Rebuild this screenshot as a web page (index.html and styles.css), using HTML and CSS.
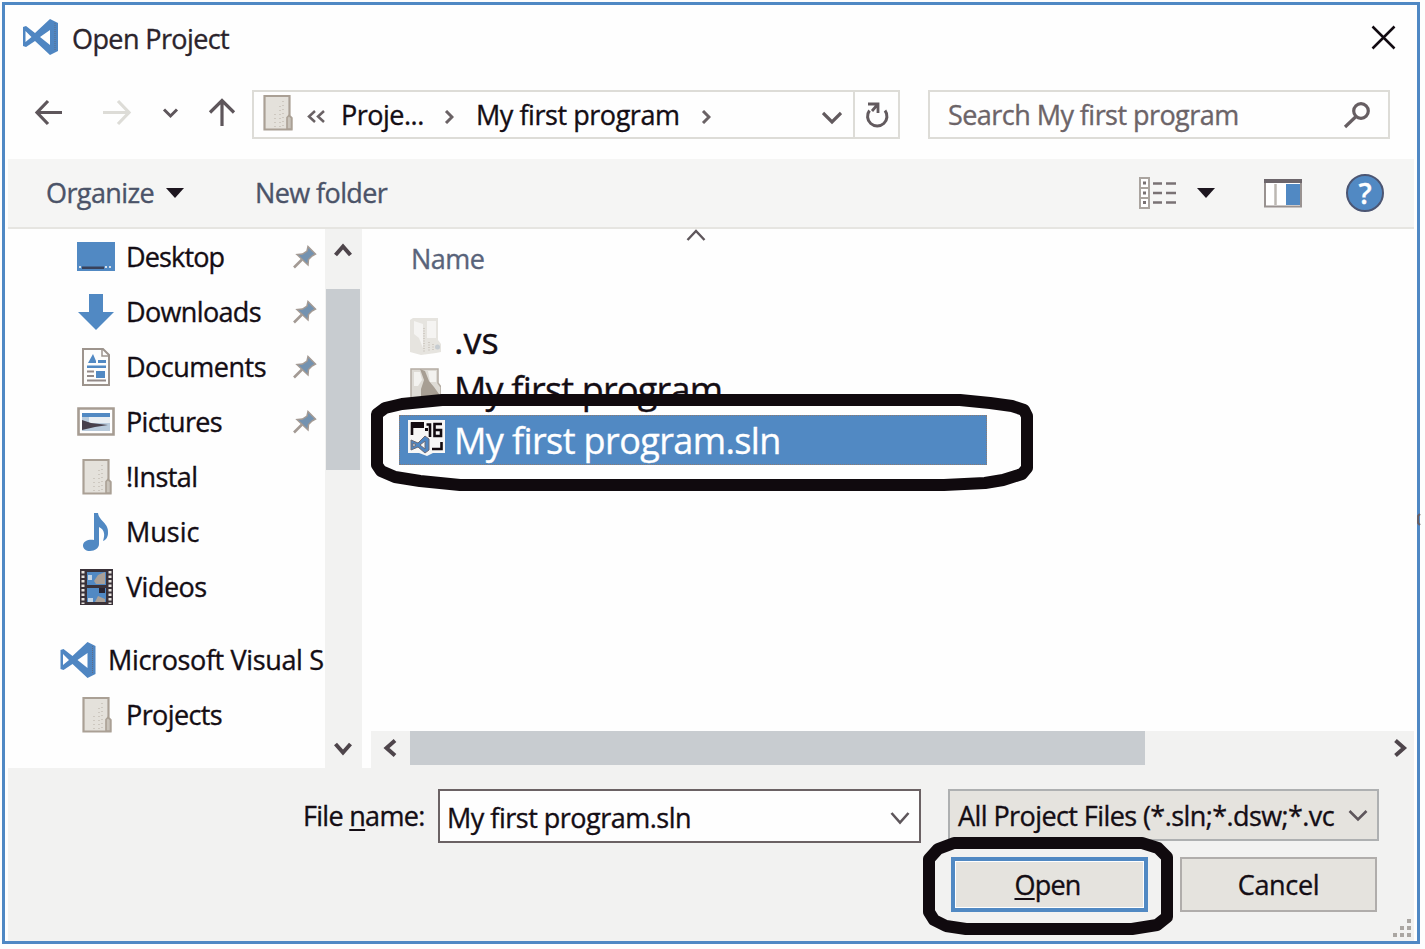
FILE: index.html
```html
<!DOCTYPE html>
<html lang="en">
<head>
<meta charset="utf-8">
<title>Open Project</title>
<link rel="stylesheet" href="styles.css">
</head>
<body>
<svg class="defs" width="0" height="0" aria-hidden="true">
  <symbol id="vs" viewBox="0 0 37 36">
    <path fill="#4f86c2" fill-rule="evenodd" d="M1 8 4 7 13 14 28 0 36 4V32L28 36 13 22 4 28 1 27ZM3.500 12V23L9.500 18ZM28 11 18 18 28 26Z"/>
    <path d="M33 4V32" stroke="#5f6c85" stroke-width="1" stroke-dasharray="1 1"/>
  </symbol>
  <symbol id="folder" viewBox="0 0 30 37">
    <path fill="#e4e1db" stroke="#aaa095" stroke-width="2.200" d="M1.500 2H26.500V22L28.500 24V35.500H1.500Z"/>
    <path fill="#c9c3ba" stroke="#aaa095" stroke-width="1.600" d="M24 35V23.500L26 21.500 28.500 24V35Z"/>
    <path stroke="#b7afa5" stroke-dasharray="1 3" d="M17 12V33M20 7V33M12 20V33"/>
  </symbol>
  <symbol id="pin" viewBox="0 0 24 24">
    <path d="M1 22.500 9 14.500" stroke="#a39a94" stroke-width="2.600"/>
    <path fill="#7392b0" stroke="#a39a94" stroke-width="1.500" d="M15 1.500 22.500 9 19 11 15.500 14.500 15 20 4 9.500 9.500 9 14 6Z"/>
  </symbol>
</svg>
<div class="dialog">
  <header class="titlebar">
    <svg class="logo" width="37" height="36"><use href="#vs"/></svg>
    <h1 class="title t-60">Open Project</h1>
    <svg class="close" width="25" height="25" viewBox="0 0 25 25"><path d="M1.500 1.500 23.500 23.500M23.500 1.500 1.500 23.500" stroke="#120b12" stroke-width="2.500"/></svg>
  </header>

  <nav class="address-row">
    <svg class="nav-icons" width="205" height="32" viewBox="32 96 205 32" fill="none" stroke="#5e565b" stroke-width="3.200">
      <path d="M62 112.500H37M48 101 37 112.500 48 124"/>
      <path stroke="#dddcd7" d="M103 112.500H128M118 101 129 112.500 118 124"/>
      <path stroke-width="3" d="M164 109.500 170.500 116 177 109.500"/>
      <path d="M222 126V101M210 112.500 222 100.500 234 112.500"/>
    </svg>
    <div class="address">
      <svg class="addr-folder" width="30" height="37"><use href="#folder"/></svg>
      <svg class="dbl" width="19" height="13" viewBox="0 0 19 13" fill="none" stroke="#6a6265" stroke-width="2.500"><path d="M8 1 2 6.500 8 12M17 1 11 6.500 17 12"/></svg>
      <span class="crumb crumb-1 t-50">Proje...</span>
      <svg class="gt" width="10" height="14" viewBox="0 0 10 14" fill="none" stroke="#6a6265" stroke-width="3"><path d="M2 1 8 7 2 13"/></svg>
      <span class="crumb crumb-2 t-45">My first program</span>
      <svg class="gt" width="10" height="14" viewBox="0 0 10 14" fill="none" stroke="#6a6265" stroke-width="3"><path d="M2 1 8 7 2 13"/></svg>
      <svg class="addr-drop" width="20" height="14" viewBox="0 0 20 14" fill="none" stroke="#625a5e" stroke-width="3.200"><path d="M1 2 10 11 19 2"/></svg>
      <div class="refresh">
        <svg width="24" height="27" viewBox="0 0 24 27" fill="none" stroke="#625a5e" stroke-width="3"><path d="M4.500 9.500A9.700 9.700 0 1 0 20 9.500"/><path d="M3 3H13V12M13 3 7 10" stroke-width="2.800"/></svg>
      </div>
    </div>
    <div class="search">
      <span class="t-55">Search My first program</span>
      <svg width="28" height="28" viewBox="0 0 28 28" fill="none" stroke="#665e62" stroke-width="3.200"><circle cx="18" cy="10" r="7.300"/><path d="M13 15.500 2 26"/></svg>
    </div>
  </nav>

  <div class="toolbar">
    <span class="organize t-60">Organize</span>
    <svg class="tri" width="18" height="10" viewBox="0 0 18 10"><path fill="#1d161f" d="M0 0H18L9 10Z"/></svg>
    <span class="newfolder t-60">New folder</span>
    <svg class="view" width="39" height="32" viewBox="0 0 39 32" fill="none">
      <path fill="#fff" stroke="#aaa49f" stroke-width="2" d="M2 1H11V31H2ZM2 11H11M2 21H11"/>
      <path stroke="#7a7274" stroke-width="3" d="M5 6H8M5 16H8M5 25.500H8"/>
      <path stroke="#7a7274" stroke-width="2.600" d="M15 6.500H24M28 6.500H38M15 16H24M28 16H38M15 25.500H24M28 25.500H38"/>
    </svg>
    <svg class="tri tri-view" width="18" height="10" viewBox="0 0 18 10"><path fill="#1d161f" d="M0 0H18L9 10Z"/></svg>
    <svg class="pane" width="38" height="30" viewBox="0 0 38 30">
      <path fill="#fff" stroke="#999290" stroke-width="2" d="M1 2H37V28.500H1Z"/>
      <path fill="#6d666b" d="M0 1H38V5H0Z"/><path fill="#5189c3" d="M22 6H36V27H22Z"/>
      <path stroke="#bdb8b3" stroke-width="2.500" d="M11.500 6V27"/>
    </svg>
    <span class="help">?</span>
  </div>

  <main class="content">
    <aside class="sidebar">
      <ul class="places">
        <li class="place"><span class="ico"><svg width="38" height="29" viewBox="0 0 38 29"><path fill="#5189c3" d="M0 0H38V29H0Z"/><path fill="#39415a" d="M5 24.500H27V27H5Z"/><path stroke="#d5dfea" stroke-width="2" stroke-dasharray="2 2" d="M28 25H36M2 25H5"/></svg></span><span class="label t-85">Desktop</span><svg class="pin" width="24" height="24"><use href="#pin"/></svg></li>
        <li class="place"><span class="ico"><svg width="38" height="38" viewBox="0 0 38 38"><path fill="#5189c3" d="M12 1H26V19H37L19 37 1 19H12Z"/></svg></span><span class="label t-65">Downloads</span><svg class="pin" width="24" height="24"><use href="#pin"/></svg></li>
        <li class="place"><span class="ico"><svg width="30" height="38" viewBox="0 0 30 38"><path fill="#fdfdfc" stroke="#9d948d" stroke-width="2" d="M2 1H22L28 7V37H2Z"/><path fill="none" stroke="#9d948d" stroke-width="1.500" d="M21 1V8H28"/><path fill="#5189c3" d="M7 15 12 6 15 13V15ZM17 12H25V15H17ZM6 17.500H25V20H6ZM15 23H24V30H15Z"/><path stroke="#938a88" stroke-width="1.800" d="M6 23.500H13M6 28H13M6 32.500H25"/></svg></span><span class="label t-50">Documents</span><svg class="pin" width="24" height="24"><use href="#pin"/></svg></li>
        <li class="place"><span class="ico"><svg width="38" height="29" viewBox="0 0 38 29"><path fill="#fff" stroke="#a69c92" stroke-width="2.600" d="M1.500 1.500H36.500V27.500H1.500Z"/><path fill="#5189c3" d="M5 6H33V10H5Z"/><path fill="#b9cbdc" d="M5 10H33V24H5Z"/><path fill="#e8eef3" d="M12 10H33V16H12Z"/><path fill="#47404c" d="M5 13 14 16 31 18 18 20 5 23Z"/></svg></span><span class="label t-65">Pictures</span><svg class="pin" width="24" height="24"><use href="#pin"/></svg></li>
        <li class="place"><span class="ico ico-folder"><svg width="30" height="37"><use href="#folder"/></svg></span><span class="label t-60">!Instal</span></li>
        <li class="place"><span class="ico"><svg width="26" height="38" viewBox="0 0 26 38"><path fill="#5189c3" d="M11 0H15C16 8 26 10 25 20 25 24 23 27 20 28 22 22 22 17 16 14V31C16 35 12 38 7 38 3 38 0 36 0 32.500 0 28 6 26 11 27Z"/></svg></span><span class="label">Music</span></li>
        <li class="place"><span class="ico"><svg width="33" height="36" viewBox="0 0 33 36"><path fill="#3a3239" d="M0 0H33V36H0Z"/><path stroke="#e8e4df" stroke-width="3" stroke-dasharray="2.500 2" d="M3 2V35M30 2V35"/><path fill="#5189c3" d="M7 3H26V16H7ZM7 19H26V33H7Z"/><path fill="#aaa097" d="M14 12 18 6 25 3V15H16ZM15 33 18 27 25 30V33Z"/><path fill="#c3d4e4" d="M8 6H12V11H8ZM8 29H13V33H8Z"/><path fill="#292532" d="M19 19H25V24H19Z"/></svg></span><span class="label t-50">Videos</span></li>
        <li class="place root"><svg width="38" height="36"><use href="#vs"/></svg><span class="label t-40">Microsoft Visual S</span></li>
        <li class="place"><span class="ico ico-folder"><svg width="30" height="37"><use href="#folder"/></svg></span><span class="label t-60">Projects</span></li>
      </ul>
      <div class="vscroll">
        <svg width="18" height="16" viewBox="0 0 18 16" fill="none" stroke="#4e454b" stroke-width="4"><path d="M1.500 13 9 4.500 16.500 13"/></svg>
        <div class="vthumb"></div>
        <svg width="18" height="16" viewBox="0 0 18 16" fill="none" stroke="#4e454b" stroke-width="4"><path d="M1.500 3 9 11.500 16.500 3"/></svg>
      </div>
    </aside>
    <section class="files">
      <svg class="sort" width="20" height="12" viewBox="0 0 20 12" fill="none" stroke="#5e565b" stroke-width="2.400"><path d="M1.500 11 10 2 18.500 11"/></svg>
      <div class="column-head t-50">Name</div>
      <div class="file">
        <svg class="ficon" width="31" height="38" viewBox="0 0 31 38"><path fill="#e6e4df" d="M0 2 3 0H28V22L31 26V34L26 35 11 37 0 34Z"/><path fill="#f5f4f2" d="M4 3 13 6V30L9 20 4 16ZM17 3H26V20H17Z"/><path stroke="#bbb3a9" stroke-dasharray="1 1.500" d="M14 10V34M19 24V34M23 26V33"/><circle cx="27.500" cy="29" r="2.500" fill="#c6ccd1"/></svg>
        <span>.vs</span>
      </div>
      <div class="file file-mid">
        <svg class="ficon" width="31" height="38" viewBox="0 0 31 38"><path fill="#dedbd5" stroke="#b4aca2" stroke-width="1.500" d="M1 1H28V15L31 19V37H1Z"/><path fill="#a79e93" d="M10 1 15 3 19 13 24 19 29 26V37H11V21L14 12Z"/><path fill="#f3f2ef" d="M4 4H10L12 12 8 18H4ZM18 3H26V14H20Z"/></svg>
        <span class="t-80">My first program</span>
      </div>
      <div class="file selected">
        <svg class="ficon" width="37" height="37" viewBox="0 0 37 37">
          <path fill="#f7f7f6" d="M0 1H37V34H25L19 37 11 34H0Z"/>
          <path fill="none" stroke="#120b10" stroke-width="2.600" d="M4 16V4.500H16M33.500 23V30H24"/><path fill="#120b10" d="M3 3H16V9H3ZM17 9H20V12H17Z"/>
          <path fill="none" stroke="#120b10" stroke-width="2.600" d="M18.500 5.500H22V18M34 5H26.500V17H33V11H27"/>
          <path fill="#4f86c2" stroke="#6b6a78" fill-rule="evenodd" d="M3 21 10 24 17 17 21 20V31L17 34 10 28 3 31ZM5 24V28L8 26ZM17 22 12 26 17 30Z"/>
        </svg>
        <span class="t-60">My first program.sln</span>
      </div>
      <div class="hscroll">
        <svg width="15" height="18" viewBox="0 0 15 18" fill="none" stroke="#4e454b" stroke-width="4"><path d="M12 1.500 3.500 9 12 16.500"/></svg>
        <div class="hthumb"></div>
        <svg width="15" height="18" viewBox="0 0 15 18" fill="none" stroke="#4e454b" stroke-width="4"><path d="M2.500 1.500 11 9 2.500 16.500"/></svg>
      </div>
    </section>
  </main>

  <footer class="footer">
    <div class="footer-row">
      <label class="fn-label t-70">File <u>n</u>ame:</label>
      <div class="fn-input"><span class="t-50">My first program.sln</span>
        <svg width="20" height="14" viewBox="0 0 20 14" fill="none" stroke="#5e565b" stroke-width="2.600"><path d="M1.500 2 10 11.500 18.500 2"/></svg></div>
      <div class="filter"><span class="t-58">All Project Files (*.sln;*.dsw;*.vc</span>
        <svg width="20" height="13" viewBox="0 0 20 13" fill="none" stroke="#5e565b" stroke-width="2.600"><path d="M1.500 2 10 10.500 18.500 2"/></svg></div>
    </div>
    <div class="buttons">
      <button class="btn primary"><span class="open-text t-80"><u>O</u>pen</span></button>
      <button class="btn"><span class="t-40">Cancel</span></button>
    </div>
  </footer>
</div>

<svg class="marks" width="1425" height="949" viewBox="0 0 1425 949" fill="none" stroke="#100a0e" stroke-width="12" stroke-linejoin="round">
  <path d="M442 400H960L990 403 1012 406 1024 410 1027 416V468L1022 474 1003 480 985 483 944 485H460L420 481 395 477 381 471 377 465V414L385 408 402 404Z"/>
  <path d="M954 843H1142L1158 848 1167 857V917L1157 925 1132 929H966L946 926 934 920 929 912V859L938 849Z"/>
  <path stroke="#6b5f63" stroke-width="2" d="M1420 514 1418 516V523L1420 525"/>
  <path stroke="#aaa6a2" stroke-width="4" d="M1407 921H1411M1400 928H1404M1407 928H1411M1393 935H1397M1400 935H1404M1407 935H1411"/>
</svg>
</body>
</html>
```

FILE: styles.css
```css
* { box-sizing: border-box; }
body {
  margin: 0;
  width: 1425px;
  height: 949px;
  overflow: hidden;
  background: #fdfdfd;
  color: #140d14;
  font-family: "Open Sans", "Noto Sans", sans-serif;
  font-size: 27px;
  line-height: 36px;
  white-space: nowrap;
  -webkit-text-stroke-width: 0.35px;
}
svg { display: block; flex: none; }
.defs { position: absolute; }
u { text-underline-offset: 3px; text-decoration-thickness: 2px; }

.t-40 { letter-spacing: -0.36px; }
.t-45 { letter-spacing: -0.45px; }
.t-50 { letter-spacing: -0.5px; }
.t-55 { letter-spacing: -0.55px; }
.t-58 { letter-spacing: -0.58px; }
.t-60 { letter-spacing: -0.6px; }
.t-65 { letter-spacing: -0.65px; }
.t-70 { letter-spacing: -0.7px; }
.t-80 { letter-spacing: -0.8px; }
.t-85 { letter-spacing: -0.85px; }

.dialog {
  display: flex;
  flex-direction: column;
  width: 1418px;
  height: 942px;
  margin: 2px 0 0 2px;
  border: 3px solid #4f88c4;
  background: #fefefe;
}
.titlebar {
  display: flex;
  align-items: flex-start;
  height: 85px;
  padding: 14px 21px 0 17px;
}
.title { margin: 2px 0 0 13px; font-size: 27px; font-weight: 400; color: #2b242c; }
.close { margin: 6px 0 0 auto; }

.address-row { display: flex; height: 69px; padding-left: 27px; }
.nav-icons { margin: 6px 15px 0 0; }
.address {
  display: flex;
  align-items: center;
  width: 648px;
  height: 49px;
  padding-left: 9px;
  border: 2px solid #dddcd7;
}
.addr-folder { margin-top: -4px; }
.dbl { margin: 3px 0 0 14px; }
.crumb-1 { width: 103px; margin-left: 15px; }
.crumb-2 { width: 225px; margin-left: 22px; }
.gt { margin-top: 4px; }
.addr-drop { margin: 6px 0 0 auto; }
.refresh {
  display: flex;
  align-items: center;
  justify-content: center;
  align-self: stretch;
  width: 45px;
  margin-left: 11px;
  border-left: 2px solid #dddcd7;
}
.search {
  display: flex;
  align-items: center;
  justify-content: space-between;
  width: 462px;
  height: 49px;
  margin-left: 28px;
  padding: 0 17px 0 18px;
  border: 2px solid #dddcd7;
  color: #6c6468;
}

.toolbar {
  display: flex;
  align-items: center;
  height: 70px;
  margin: 0 3px;
  padding-left: 38px;
  border-bottom: 2px solid #e6e5e1;
  background: #f5f5f4;
  color: #4b5368;
}
.organize { width: 120px; }
.newfolder { width: 883px; margin-left: 71px; }
.tri-view { margin-left: 20px; }
.pane { margin-left: 49px; }
.help {
  width: 38px;
  height: 38px;
  margin-left: 44px;
  border: 2px solid #4c5673;
  border-radius: 50%;
  background: #5189c3;
  color: #fff;
  font-size: 29px;
  font-weight: 600;
  line-height: 34px;
  text-align: center;
}

.content { display: flex; height: 539px; }
.sidebar { display: flex; width: 357px; }
.places { width: 320px; margin: 0; padding: 0; list-style: none; overflow: hidden; }
.place { display: flex; align-items: center; height: 55px; padding-left: 72px; }
.ico { display: flex; justify-content: center; width: 38px; }
.ico-folder { padding-left: 2px; }
.label { margin-left: 11px; }
.pin { margin: 0 8px 0 auto; }
.root { margin-top: 18px; padding-left: 54px; }
.vscroll {
  display: flex;
  flex-direction: column;
  align-items: center;
  width: 37px;
  padding: 13px 2px 11px 0;
  background: #f2f2f1;
}
.vthumb { width: 34px; height: 181px; margin: 31px 0 auto; background: #c8ccd0; }

.files { display: flex; flex-direction: column; flex: 1; margin-left: 9px; }
.sort { margin: 0 0 0 315px; }
.column-head { height: 36px; margin: 0 0 38px 40px; color: #59637a; }
.file {
  display: flex;
  width: 588px;
  height: 50px;
  margin-left: 28px;
  padding-left: 11px;
  font-size: 36px;
  line-height: 51px;
}
.file-mid { line-height: 49px; }
.ficon { margin: 3px 13px 0 0; }
.selected { border: 1px dotted #8c7b72; background: #5189c3; color: #fff; padding-left: 8px; line-height: 50px; }
.selected .ficon { margin: 3px 9px 0 0; }
.hscroll {
  display: flex;
  align-items: center;
  height: 37px;
  margin: auto 3px 0 0;
  padding: 0 6px 3px 12px;
  background: #f2f2f1;
}
.hthumb { width: 735px; height: 34px; margin: 0 auto 0 12px; background: #c8ccd0; }

.footer { flex: 1; margin: 0 3px; background: #f2f2f1; }
.footer-row { display: flex; height: 89px; padding: 21px 0 0 295px; }
.fn-label { width: 135px; padding-top: 9px; }
.fn-input {
  display: flex;
  align-items: center;
  justify-content: space-between;
  width: 483px;
  height: 54px;
  padding: 3px 9px 0 7px;
  border: 2px solid #6b6264;
  background: #fefefe;
}
.filter {
  display: flex;
  align-items: center;
  justify-content: space-between;
  width: 431px;
  height: 52px;
  margin-left: 27px;
  padding: 1px 9px 0 8px;
  border: 2px solid #aeb0b1;
  background: #e5e3de;
}
.buttons { display: flex; gap: 32px; padding-left: 943px; }
.btn {
  width: 197px;
  height: 55px;
  padding: 0;
  border: 2px solid #b0adab;
  background: #e5e3de;
  color: inherit;
  font: inherit;
}
.primary { border: 4px solid #5189c3; box-shadow: inset 0 0 0 1px #fff; }
.open-text { margin-right: 4px; }
.marks { position: absolute; top: 0; left: 0; pointer-events: none; }
```
